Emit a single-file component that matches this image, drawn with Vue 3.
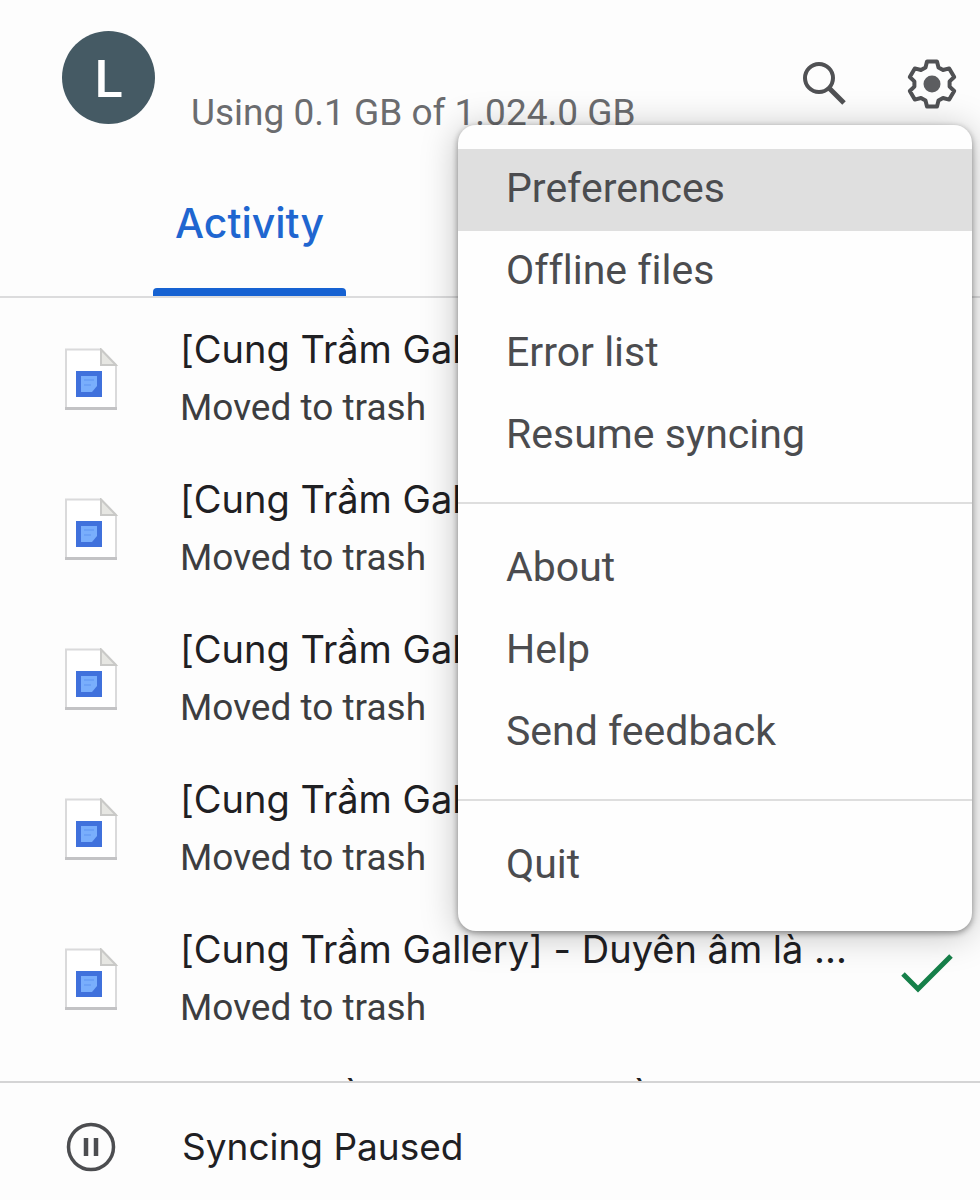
<script setup>
import { ref } from 'vue'

const files = [
  { title: '[Cung Trầm Gallery] - Duyên âm là Gì', status: 'Moved to trash' },
  { title: '[Cung Trầm Gallery] - Duyên âm là Gì', status: 'Moved to trash' },
  { title: '[Cung Trầm Gallery] - Duyên âm là Gì', status: 'Moved to trash' },
  { title: '[Cung Trầm Gallery] - Duyên âm là Gì', status: 'Moved to trash' },
  { title: '[Cung Trầm Gallery] - Duyên âm là ...', status: 'Moved to trash', done: true },
  { title: '[Cung Trầm Gallery] - Miền', status: 'Moved to trash' }
]

const groups = [
  ['Preferences', 'Offline files', 'Error list', 'Resume syncing'],
  ['About', 'Help', 'Send feedback'],
  ['Quit']
]
const active = ref('Preferences')
</script>

<template>
  <div class="app">
    <header class="header">
      <div class="avatar">L</div>
      <p class="usage">Using 0.1 GB of 1.024.0 GB</p>
      <div class="actions">
        <button class="icon-btn" aria-label="Search">
          <svg viewBox="0 0 60 60" fill="none" stroke="#505154">
            <circle cx="23" cy="24" r="14" stroke-width="4" />
            <path d="M33 34 48 49" stroke-width="5" />
          </svg>
        </button>
        <button class="icon-btn" aria-label="Settings" aria-haspopup="menu" aria-expanded="true">
          <svg viewBox="-30 -30 60 60">
            <path
              d="M-6.5-16.5-5-22.5H5L6.5-16.5 11-14 17.2-15.6 22.2-7 17.6-2.6V2.6L22.2 7 17.2 15.6 11 14 6.5 16.5 5 22.5H-5L-6.5 16.5-11 14-17.2 15.6-22.2 7-17.6 2.6V-2.6L-22.2-7-17.2-15.6-11-14Z"
              fill="none"
              stroke="#505154"
              stroke-width="4"
              stroke-linejoin="round"
            />
            <circle r="8.5" fill="#5c5d60" />
          </svg>
        </button>
      </div>
    </header>

    <nav class="tabs">
      <a class="tab" href="#activity" aria-current="page">Activity</a>
    </nav>

    <ul class="list">
      <li v-for="(file, i) in files" :key="i" class="row">
        <svg class="doc" viewBox="0 0 54 62">
          <path d="M2 1.5H37L52 17V60H2Z" fill="#fff" stroke="#dadadb" stroke-width="2" />
          <path d="M1 60.5H53" stroke="#c3c3c5" stroke-width="3" />
          <path d="M37 1.5V17H52Z" fill="#e6e6e2" stroke="#c9c9c7" stroke-width="2" />
          <path d="M12 23H38V49H12Z" fill="#4071dc" />
          <path d="M17 28H33V38L28 44H17Z" fill="#79aefc" />
          <path d="M20 32H30M20 37H27" stroke="#6ba1f7" stroke-width="2" />
        </svg>
        <div class="info">
          <p class="title">{{ file.title }}</p>
          <p class="status">{{ file.status }}</p>
        </div>
        <svg v-if="file.done" class="check" viewBox="0 0 54 44" fill="none" stroke="#16804a" stroke-width="5">
          <path d="M3 22 18 37 51 4" />
        </svg>
      </li>
    </ul>

    <footer class="footer">
      <svg class="pause" viewBox="0 0 50 50" fill="none" stroke="#4c4d50">
        <circle cx="25" cy="25" r="22.5" stroke-width="3.5" />
        <path d="M20 16V34M30 16V34" stroke-width="4.5" />
      </svg>
      <p class="sync">Syncing Paused</p>
    </footer>

    <div class="menu" role="menu">
      <div v-for="(group, g) in groups" :key="g" class="group" role="group">
        <button
          v-for="item in group"
          :key="item"
          class="item"
          :class="{ active: item === active }"
          role="menuitem"
          @mouseenter="active = item"
        >{{ item }}</button>
      </div>
    </div>
  </div>
</template>

<style>
body {
  margin: 0;
  background: #fdfdfd;
}
</style>

<style scoped>
.app {
  position: relative;
  display: flex;
  flex-direction: column;
  height: 100vh;
  overflow: hidden;
  background: #fdfdfd;
  font-family: Roboto, "Liberation Sans", sans-serif;
  font-variant-ligatures: none;
}
p, ul {
  margin: 0;
  padding: 0;
}
button {
  border: 0;
  padding: 0;
  background: none;
  font: inherit;
  font-variant-ligatures: none;
  text-align: left;
}
.header {
  display: flex;
  align-items: flex-start;
  padding: 31px 18px 0 62px;
  height: 123px;
  flex: none;
}
.avatar {
  width: 93px;
  height: 93px;
  border-radius: 50%;
  background: #455a64;
  color: #fff;
  font-size: 52px;
  font-weight: 500;
  line-height: 98px;
  text-align: center;
}
.usage {
  flex: 1;
  padding: 60px 0 0 36px;
  font-size: 37px;
  line-height: 44px;
  color: #6b6c6f;
  white-space: nowrap;
}
.actions {
  display: flex;
  gap: 46px;
  padding-top: 23px;
}
.icon-btn {
  width: 60px;
  height: 60px;
}
.icon-btn svg {
  display: block;
  width: 60px;
  height: 60px;
}
.tabs {
  display: flex;
  flex: none;
  height: 142px;
  padding-left: 153px;
  border-bottom: 2px solid #dcdcdd;
}
.tab {
  position: relative;
  display: flex;
  align-items: flex-start;
  justify-content: center;
  box-sizing: border-box;
  width: 193px;
  padding-top: 45px;
  font-family: Inter, "Noto Sans", sans-serif;
  font-size: 41px;
  font-weight: 500;
  line-height: 48px;
  color: #1f66d0;
  text-decoration: none;
}
.tab::after {
  content: "";
  position: absolute;
  left: 0;
  right: 0;
  bottom: 0;
  height: 8px;
  border-radius: 4px 4px 0 0;
  background: #1662d2;
}
.list {
  flex: 1;
  min-height: 0;
  overflow: hidden;
  list-style: none;
}
.row {
  display: flex;
  align-items: flex-start;
  height: 150px;
  padding: 0 28px 0 64px;
}
.doc {
  flex: none;
  width: 54px;
  height: 62px;
  margin-top: 50px;
}
.info {
  flex: 1;
  min-width: 0;
  padding: 24px 0 0 62px;
}
.title, .sync {
  font-family: Inter, "Noto Sans", sans-serif;
  font-size: 37px;
  line-height: 54px;
  color: #1f2023;
  white-space: nowrap;
}
.title {
  overflow: hidden;
  font-size: 38px;
}
.status {
  font-size: 37px;
  line-height: 64px;
  color: #3c3d40;
}
.check {
  flex: none;
  width: 54px;
  height: 44px;
  margin: 54px -2px 0 0;
}
.footer {
  display: flex;
  align-items: center;
  flex: none;
  gap: 66px;
  height: 119px;
  padding: 10px 0 0 66px;
  box-sizing: border-box;
  border-top: 2px solid #d4d4d5;
}
.pause {
  width: 50px;
  height: 50px;
}
.menu {
  position: absolute;
  top: 125px;
  right: 8px;
  width: 514px;
  padding: 24px 0;
  box-sizing: border-box;
  border-radius: 18px;
  background: #fefefe;
  box-shadow: 0 2px 6px rgba(0, 0, 0, 0.4), 0 4px 36px rgba(0, 0, 0, 0.25);
}
.group + .group {
  margin-top: 25px;
  padding-top: 24px;
  border-top: 2px solid #dedede;
}
.item {
  display: block;
  width: 100%;
  height: 82px;
  padding: 0 48px 4px;
  font-size: 41px;
  line-height: 78px;
  color: #4b4c4f;
}
.active {
  background: #dfdfdf;
}
</style>
